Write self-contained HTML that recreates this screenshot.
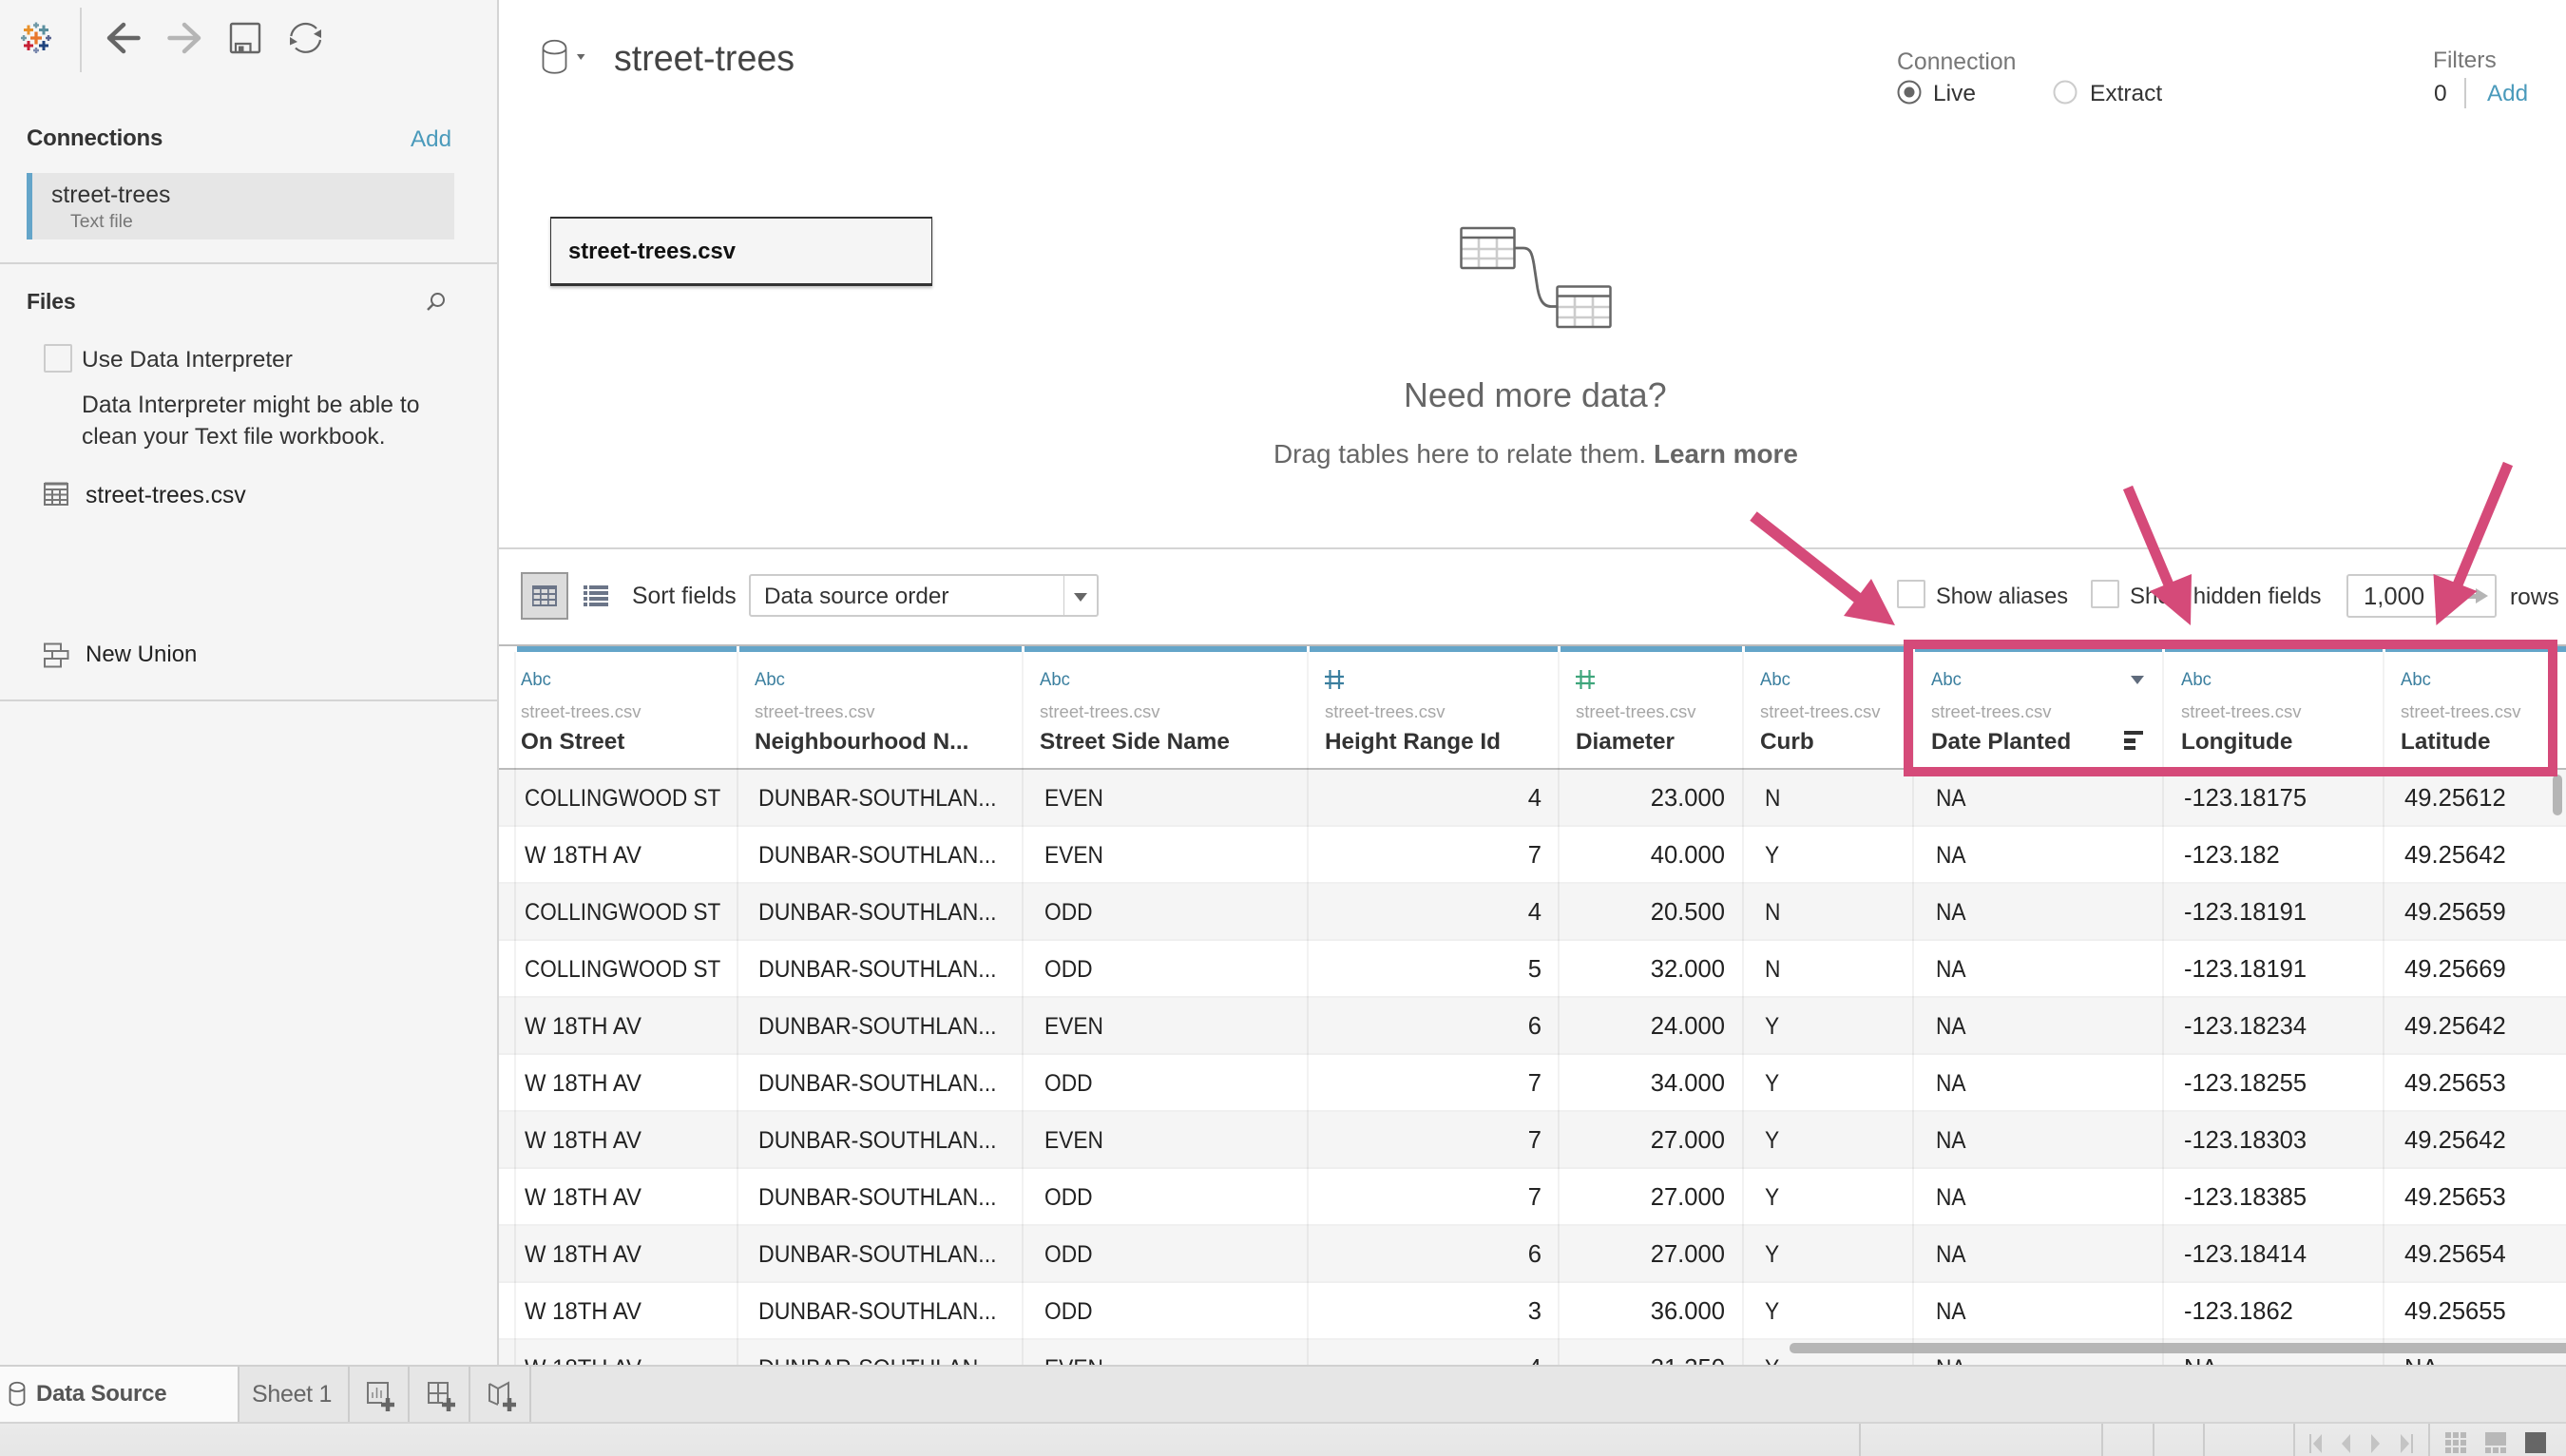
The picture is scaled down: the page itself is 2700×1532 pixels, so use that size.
<!DOCTYPE html>
<html lang="en"><head><meta charset="utf-8"><title>street-trees</title>
<style>
html,body{margin:0;padding:0;width:2700px;height:1532px;overflow:hidden;background:#fff}
#a{position:relative;width:2700px;height:1532px;overflow:hidden;font-family:"Liberation Sans",Arial,sans-serif;color:#333;font-size:24.5px}
#a div,#a span{position:absolute;white-space:nowrap}
.t{line-height:30px;height:30px;margin-top:1px}
.z{margin-top:0}
.b{font-weight:bold}
.add{color:#4a9abb}
.cb{width:26px;height:26px;border:2px solid #ccc;border-radius:2px;background:#fff}
.bl{height:6px;top:680px;background:#64a5c9}
.vd{width:2px;top:686px;height:750px;background:rgba(0,0,0,.05)}
.abc{top:703px;line-height:24px;font-size:19.5px;color:#3b7f9f;transform:scaleX(.95);transform-origin:0 50%}
.src{top:736px;line-height:26px;font-size:18.5px;color:#a6a6a6}
.nm{top:766px;line-height:30px;font-size:24.3px;font-weight:bold;color:#333}
#rows{left:525px;top:810px;width:2175px;height:626px;overflow:hidden}
.r{left:0;width:2175px;height:58px;background:#fff;border-bottom:2px solid #f0f0f0;color:#222}
.g{background:#f5f5f5;border-bottom:2px solid #efefef}
.r span{top:15px;line-height:30px;font-size:25px}
.x{transform:scaleX(.91);transform-origin:0 50%}
.cw{transform:scaleX(.9);transform-origin:0 50%}
.w{transform:scaleX(.955);transform-origin:0 50%}
.du{transform:scaleX(.925);transform-origin:0 50%}
.c1{left:27px}.c2{left:273px}.c3{left:574px}.c6{left:1332px}.c7{left:1512px}
.c4{font-size:25.6px!important;width:60px;text-align:right;left:1037px}
.c5{left:1170px;width:120px;text-align:right;font-size:25.6px!important}
.c8{left:1773px;font-size:25.5px!important}.c9{left:2005px;font-size:25.6px!important}
svg{position:absolute;left:0;top:0;overflow:visible}
</style></head><body><div id="a">

<!-- sidebar -->
<div style="left:0;top:0;width:523px;height:1436px;background:#f5f5f5"></div>
<div style="left:523px;top:0;width:2px;height:1436px;background:#d4d4d4"></div>
<div style="left:0;top:276px;width:523px;height:2px;background:#d4d4d4"></div>
<div style="left:0;top:736px;width:523px;height:2px;background:#d4d4d4"></div>
<div style="left:84px;top:8px;width:2px;height:68px;background:#d4d4d4"></div>

<div class="t b" style="left:28px;top:130px;font-size:24px;letter-spacing:-.2px;color:#333">Connections</div>
<div class="t add" style="left:432px;top:131px;font-size:24.2px">Add</div>
<div style="left:28px;top:182px;width:450px;height:70px;background:#e6e6e6"></div>
<div style="left:28px;top:182px;width:6px;height:70px;background:#64a5c9"></div>
<div class="t" style="left:54px;top:190px;font-size:24.8px;color:#333">street-trees</div>
<div class="t z" style="left:74px;top:218px;font-size:19.4px;color:#777">Text file</div>
<div class="t b z" style="left:28px;top:302px;font-size:23px;letter-spacing:-.2px">Files</div>
<div class="cb" style="left:46px;top:362px;background:#f5f5f5"></div>
<div class="t" style="left:86px;top:363px">Use Data Interpreter</div>
<div class="t" style="left:86px;top:411px;font-size:24.7px;color:#333">Data Interpreter might be able to</div>
<div class="t" style="left:86px;top:444px;font-size:24.4px;color:#333">clean your Text file workbook.</div>
<div class="t" style="left:90px;top:506px;font-size:24.7px;color:#222">street-trees.csv</div>
<div class="t" style="left:90px;top:673px;font-size:24px;color:#222">New Union</div>

<!-- header -->
<div class="t z" style="left:646px;top:43px;font-size:37.6px;line-height:36px;height:36px;color:#444">street-trees</div>
<div class="t" style="left:1996px;top:50px;font-size:24.8px;color:#777">Connection</div>
<div class="t" style="left:2034px;top:83px;color:#333">Live</div>
<div class="t" style="left:2199px;top:83px;color:#333">Extract</div>
<div class="t" style="left:2560px;top:48px;color:#777">Filters</div>
<div class="t" style="left:2561px;top:83px;color:#333">0</div>
<div style="left:2593px;top:82px;width:2px;height:32px;background:#ccc"></div>
<div class="t add" style="left:2617px;top:83px;font-size:24.2px">Add</div>

<div style="left:579px;top:228px;width:400px;height:68px;background:#f5f5f5;border:solid #333;border-width:2px 1.5px 3px;box-shadow:0 2px 3px rgba(0,0,0,.25)"></div>
<div class="t b" style="left:598px;top:249px;font-size:23.8px;color:#111">street-trees.csv</div>
<div class="t" style="left:1477px;top:397px;height:36px;line-height:36px;font-size:35.8px;color:#666">Need more data?</div>
<div class="t z" style="left:1340px;top:463px;font-size:27.9px;color:#666">Drag tables here to relate them. <b>Learn more</b></div>

<div style="left:525px;top:576px;width:2175px;height:2px;background:#d4d4d4"></div>

<!-- toolbar 2 -->
<div style="left:548px;top:602px;width:46px;height:46px;background:#dcdcdc;border:2px solid #999"></div>
<div class="t" style="left:665px;top:612px;font-size:24.7px">Sort fields</div>
<div style="left:788px;top:604px;width:364px;height:41px;background:#fff;border:2px solid #ccc;border-radius:3px"></div>
<div style="left:1119px;top:606px;width:1px;height:41px;background:#ccc"></div>
<div class="t" style="left:804px;top:612px;font-size:24.3px">Data source order</div>
<div class="cb" style="left:1996px;top:610px"></div>
<div class="t" style="left:2037px;top:612px;font-size:23.6px">Show aliases</div>
<div class="cb" style="left:2200px;top:610px"></div>
<div class="t" style="left:2241px;top:612px;font-size:24px">Show hidden fields</div>
<div style="left:2469px;top:604px;width:154px;height:42px;background:#fff;border:2px solid #ccc;border-radius:3px"></div>
<div class="t" style="left:2487px;top:612px;font-size:25.6px">1,000</div>
<div class="t" style="left:2641px;top:613px;font-size:24.5px">rows</div>

<!-- table head -->
<div style="left:525px;top:678px;width:2175px;height:2px;background:#bbb"></div>
<div class="bl" style="left:544px;width:231px"></div>
<div class="bl" style="left:778px;width:297px"></div>
<div class="bl" style="left:1078px;width:297px"></div>
<div class="bl" style="left:1378px;width:261px"></div>
<div class="bl" style="left:1642px;width:191px"></div>
<div class="bl" style="left:1836px;width:176px"></div>
<div class="bl" style="left:2015px;width:260px"></div>
<div class="bl" style="left:2278px;width:229px"></div>
<div class="bl" style="left:2510px;width:190px"></div>

<div class="abc" style="left:548px">Abc</div><div class="src" style="left:548px">street-trees.csv</div><div class="nm" style="left:548px">On Street</div>
<div class="abc" style="left:794px">Abc</div><div class="src" style="left:794px">street-trees.csv</div><div class="nm" style="left:794px">Neighbourhood N...</div>
<div class="abc" style="left:1094px">Abc</div><div class="src" style="left:1094px">street-trees.csv</div><div class="nm" style="left:1094px">Street Side Name</div>
<div class="src" style="left:1394px">street-trees.csv</div><div class="nm" style="left:1394px">Height Range Id</div>
<div class="src" style="left:1658px">street-trees.csv</div><div class="nm" style="left:1658px">Diameter</div>
<div class="abc" style="left:1852px">Abc</div><div class="src" style="left:1852px">street-trees.csv</div><div class="nm" style="left:1852px">Curb</div>
<div class="abc" style="left:2032px">Abc</div><div class="src" style="left:2032px">street-trees.csv</div><div class="nm" style="left:2032px">Date Planted</div>
<div class="abc" style="left:2295px">Abc</div><div class="src" style="left:2295px">street-trees.csv</div><div class="nm" style="left:2295px">Longitude</div>
<div class="abc" style="left:2526px">Abc</div><div class="src" style="left:2526px">street-trees.csv</div><div class="nm" style="left:2526px">Latitude</div>

<!-- rows -->
<div id="rows">
<div class="r g" style="top:0"><span class="c1 cw">COLLINGWOOD ST</span><span class="c2 du">DUNBAR-SOUTHLAN...</span><span class="c3 x">EVEN</span><span class="c4">4</span><span class="c5">23.000</span><span class="c6 x">N</span><span class="c7 x">NA</span><span class="c8">-123.18175</span><span class="c9">49.25612</span></div>
<div class="r" style="top:60px"><span class="c1 w">W 18TH AV</span><span class="c2 du">DUNBAR-SOUTHLAN...</span><span class="c3 x">EVEN</span><span class="c4">7</span><span class="c5">40.000</span><span class="c6 x">Y</span><span class="c7 x">NA</span><span class="c8">-123.182</span><span class="c9">49.25642</span></div>
<div class="r g" style="top:120px"><span class="c1 cw">COLLINGWOOD ST</span><span class="c2 du">DUNBAR-SOUTHLAN...</span><span class="c3 x">ODD</span><span class="c4">4</span><span class="c5">20.500</span><span class="c6 x">N</span><span class="c7 x">NA</span><span class="c8">-123.18191</span><span class="c9">49.25659</span></div>
<div class="r" style="top:180px"><span class="c1 cw">COLLINGWOOD ST</span><span class="c2 du">DUNBAR-SOUTHLAN...</span><span class="c3 x">ODD</span><span class="c4">5</span><span class="c5">32.000</span><span class="c6 x">N</span><span class="c7 x">NA</span><span class="c8">-123.18191</span><span class="c9">49.25669</span></div>
<div class="r g" style="top:240px"><span class="c1 w">W 18TH AV</span><span class="c2 du">DUNBAR-SOUTHLAN...</span><span class="c3 x">EVEN</span><span class="c4">6</span><span class="c5">24.000</span><span class="c6 x">Y</span><span class="c7 x">NA</span><span class="c8">-123.18234</span><span class="c9">49.25642</span></div>
<div class="r" style="top:300px"><span class="c1 w">W 18TH AV</span><span class="c2 du">DUNBAR-SOUTHLAN...</span><span class="c3 x">ODD</span><span class="c4">7</span><span class="c5">34.000</span><span class="c6 x">Y</span><span class="c7 x">NA</span><span class="c8">-123.18255</span><span class="c9">49.25653</span></div>
<div class="r g" style="top:360px"><span class="c1 w">W 18TH AV</span><span class="c2 du">DUNBAR-SOUTHLAN...</span><span class="c3 x">EVEN</span><span class="c4">7</span><span class="c5">27.000</span><span class="c6 x">Y</span><span class="c7 x">NA</span><span class="c8">-123.18303</span><span class="c9">49.25642</span></div>
<div class="r" style="top:420px"><span class="c1 w">W 18TH AV</span><span class="c2 du">DUNBAR-SOUTHLAN...</span><span class="c3 x">ODD</span><span class="c4">7</span><span class="c5">27.000</span><span class="c6 x">Y</span><span class="c7 x">NA</span><span class="c8">-123.18385</span><span class="c9">49.25653</span></div>
<div class="r g" style="top:480px"><span class="c1 w">W 18TH AV</span><span class="c2 du">DUNBAR-SOUTHLAN...</span><span class="c3 x">ODD</span><span class="c4">6</span><span class="c5">27.000</span><span class="c6 x">Y</span><span class="c7 x">NA</span><span class="c8">-123.18414</span><span class="c9">49.25654</span></div>
<div class="r" style="top:540px"><span class="c1 w">W 18TH AV</span><span class="c2 du">DUNBAR-SOUTHLAN...</span><span class="c3 x">ODD</span><span class="c4">3</span><span class="c5">36.000</span><span class="c6 x">Y</span><span class="c7 x">NA</span><span class="c8">-123.1862</span><span class="c9">49.25655</span></div>
<div class="r g" style="top:600px"><span class="c1 w">W 18TH AV</span><span class="c2 du">DUNBAR-SOUTHLAN...</span><span class="c3 x">EVEN</span><span class="c4">4</span><span class="c5">31.250</span><span class="c6 x">Y</span><span class="c7 x">NA</span><span class="c8">NA</span><span class="c9">NA</span></div>
</div>
<div style="left:525px;top:808px;width:2175px;height:2px;background:#bbb"></div>
<div class="vd" style="left:541px"></div><div class="vd" style="left:775px"></div><div class="vd" style="left:1075px"></div><div class="vd" style="left:1375px"></div><div class="vd" style="left:1639px"></div><div class="vd" style="left:1833px"></div><div class="vd" style="left:2012px"></div><div class="vd" style="left:2275px"></div><div class="vd" style="left:2507px"></div>
<div style="left:2686px;top:815px;width:10px;height:43px;border-radius:5px;background:#b5b5b5"></div>
<div style="left:1883px;top:1413px;width:817px;height:11px;border-radius:5px 0 0 5px;background:rgba(170,170,170,.85)"></div>

<!-- bottom -->
<div style="left:0;top:1436px;width:2700px;height:62px;background:#e6e6e6;border-top:2px solid #d0d0d0;box-sizing:border-box"></div>
<div style="left:0;top:1438px;width:250px;height:58px;background:#fafafa"></div>
<div style="left:0;top:1496px;width:2700px;height:2px;background:#d4d4d4"></div>
<div style="left:0;top:1498px;width:2700px;height:34px;background:linear-gradient(#eaeaea,#e6e6e6)"></div>
<div style="left:250px;top:1438px;width:2px;height:58px;background:#ccc"></div>
<div style="left:366px;top:1438px;width:2px;height:58px;background:#ccc"></div>
<div style="left:429px;top:1438px;width:2px;height:58px;background:#ccc"></div>
<div style="left:493px;top:1438px;width:2px;height:58px;background:#ccc"></div>
<div style="left:557px;top:1438px;width:2px;height:58px;background:#ccc"></div>
<div class="t b z" style="left:38px;top:1452px;font-size:24px;letter-spacing:-.25px;color:#555">Data Source</div>
<div class="t z" style="left:265px;top:1452px;font-size:25px;letter-spacing:-.3px;color:#666">Sheet 1</div>
<div style="left:1956px;top:1498px;width:2px;height:34px;background:#ccc"></div>
<div style="left:2211px;top:1498px;width:2px;height:34px;background:#ccc"></div>
<div style="left:2265px;top:1498px;width:2px;height:34px;background:#ccc"></div>
<div style="left:2318px;top:1498px;width:2px;height:34px;background:#ccc"></div>
<div style="left:2413px;top:1498px;width:2px;height:34px;background:#ccc"></div>
<div style="left:2555px;top:1498px;width:2px;height:34px;background:#ccc"></div>

<svg width="2700" height="1532" viewBox="0 0 2700 1532" fill="none">
<!-- logo -->
<g stroke-width="3">
<path d="M32 40H44M38 33.500V46.500" stroke="#e8762b" stroke-width="3.300"/>
<path d="M25 31.500H35M30 26.500V36.500" stroke="#e8912b"/>
<path d="M41 31.500H51M46 26.500V36.500" stroke="#5b8f9e"/>
<path d="M25 48H35M30 43V53" stroke="#c72035"/>
<path d="M41 48H51M46 43V53" stroke="#1f447e"/>
<path d="M35 26.500H41M38 23.500V29.500" stroke="#7099a6" stroke-width="2.400"/>
<path d="M22 40H28M25 37V43" stroke="#7099a6" stroke-width="2.400"/>
<path d="M48 40H54M51 37V43" stroke="#5b6591" stroke-width="2.400"/>
<path d="M35 53H41M38 50V56" stroke="#7b89ae" stroke-width="2.400"/>
</g>
<!-- nav -->
<path d="M145.500 40H115M130 26L115 40L130 54" stroke="#666" stroke-width="4.500" stroke-linecap="round" stroke-linejoin="round"/>
<path d="M178.500 40H209M194 26L209 40L194 54" stroke="#b5b5b5" stroke-width="4.500" stroke-linecap="round" stroke-linejoin="round"/>
<rect x="243" y="25" width="30" height="30" rx="1.500" stroke="#666" stroke-width="2.400"/>
<path d="M248 55V46H263.500V55" stroke="#666" stroke-width="2.200"/><rect x="251" y="48.500" width="5.500" height="7" fill="#666"/>
<path d="M306.300 38A15.500 15.500 0 0 1 333 30M337 42A15.500 15.500 0 0 1 311 50.500" stroke="#666" stroke-width="2.200"/>
<path d="M338 31L338 40L330 35.700ZM305 39L305 47.500L313 44Z" fill="#666"/>
<!-- search -->
<circle cx="460.500" cy="315.500" r="6.500" stroke="#666" stroke-width="2"/><path d="M455.500 320.500L450 326" stroke="#666" stroke-width="2.400"/>
<!-- table icon -->
<path d="M47 509H71V531H47ZM47 515H71M47 520.500H71M47 526H71M55 515V531M63 515V531" stroke="#777" stroke-width="2"/>
<path d="M47 509H71" stroke="#777" stroke-width="3"/>
<!-- union icon -->
<path d="M47 677.500H64V685H47ZM55 685H71.500V693H55ZM47 693H64V701.500H47Z" stroke="#777" stroke-width="2"/>
<!-- db icon -->
<path d="M571.500 51C571.500 40 595.500 40 595.500 51V70C595.500 79 571.500 79 571.500 70ZM571.500 52C575 58 592 58 595.500 52" stroke="#666" stroke-width="1.800"/>
<path d="M607 57H615.500L611.200 63Z" fill="#666"/>
<!-- relate -->
<g stroke-linejoin="round">
<path d="M1556 251V282M1575 251V282M1538 262H1593M1538 272H1593" stroke="#ccc" stroke-width="2.600"/>
<rect x="1537.500" y="240" width="56" height="42" rx="1.500" stroke="#666" stroke-width="2.500"/><path d="M1537 250H1594" stroke="#666" stroke-width="2.500"/>
<path d="M1657 312V344M1676 312V344M1639 323H1694M1639 334H1694" stroke="#ccc" stroke-width="2.600"/>
<rect x="1638.500" y="301.500" width="56" height="42.500" rx="1.500" stroke="#666" stroke-width="2.500"/><path d="M1638 311.500H1695" stroke="#666" stroke-width="2.500"/>
<path d="M1594 261H1603C1610 261 1612 266 1614 278L1617 298C1619 314 1623 322.500 1632 322.500H1638" stroke="#666" stroke-width="2.800"/>
</g>
<!-- radios -->
<circle cx="2009" cy="97" r="11.500" stroke="#666" stroke-width="2"/><circle cx="2009" cy="97" r="5.500" fill="#666"/>
<circle cx="2173" cy="97" r="11.500" stroke="#ccc" stroke-width="2"/>
<!-- view icons -->
<rect x="560" y="616" width="26" height="22" fill="#6b7588"/>
<g fill="#dcdcdc">
<rect x="561.700" y="620" width="6.300" height="4"/><rect x="569.700" y="620" width="6.300" height="4"/><rect x="577.700" y="620" width="6.300" height="4"/>
<rect x="561.700" y="626" width="6.300" height="4"/><rect x="569.700" y="626" width="6.300" height="4"/><rect x="577.700" y="626" width="6.300" height="4"/>
<rect x="561.700" y="632" width="6.300" height="4"/><rect x="569.700" y="632" width="6.300" height="4"/><rect x="577.700" y="632" width="6.300" height="4"/>
</g>
<path d="M614 616H618V620H614ZM620 616H640V620H620ZM614 622H618V626H614ZM620 622H640V626H620ZM614 628H618V632H614ZM620 628H640V632H620ZM614 634H618V638H614ZM620 634H640V638H620Z" fill="#6b7588"/>
<path d="M1130 624H1144L1137 633Z" fill="#666"/>
<path d="M2605 619L2618 627L2605 635Z" fill="#b5b5b5"/><rect x="2590" y="625" width="16" height="5" fill="#b5b5b5"/>
<!-- header hash -->
<path d="M1399.500 705V725M1409 705V725M1394 712H1414M1394 719H1414" stroke="#3b7f9f" stroke-width="2.200"/>
<path d="M1663.500 705V725M1672.500 705V725M1658 712H1678M1658 719H1678" stroke="#3fa67c" stroke-width="2.200"/>
<!-- col menu -->
<path d="M2242 711H2256L2249 720Z" fill="#5f6b7c"/>
<path d="M2235 769H2255V773H2235ZM2235 777H2247V782H2235ZM2235 785H2247V789H2235Z" fill="#333"/>
<!-- tab icons -->
<path d="M10.500 1460C10.500 1453 25.500 1453 25.500 1460V1474C25.500 1480 10.500 1480 10.500 1474ZM10.500 1461C13 1465 23 1465 25.500 1461" stroke="#666" stroke-width="1.800"/>
<path d="M408 1474V1455H387V1476H402" stroke="#777" stroke-width="2"/>
<path d="M392 1471V1465M396.500 1471V1460M401 1471V1463" stroke="#888" stroke-width="1.500"/>
<path d="M401 1478H415M408 1471V1485" stroke="#666" stroke-width="4.500"/>
<path d="M471 1474V1455H451V1476H466M451 1466H471M461 1455V1476" stroke="#777" stroke-width="2"/>
<path d="M465 1478H479M472 1471V1485" stroke="#666" stroke-width="4.500"/>
<path d="M515 1456L524 1461L535 1455V1474M515 1456V1474L524 1478M524 1461V1477" stroke="#777" stroke-width="2"/>
<path d="M529 1478H543M536 1471V1485" stroke="#666" stroke-width="4.500"/>
<!-- pager -->
<path d="M2431 1509V1529" stroke="#c4c4c4" stroke-width="2"/>
<path d="M2443 1509V1529L2434 1519ZM2473 1509V1529L2464 1519ZM2495 1509V1529L2504 1519ZM2526 1509V1529L2535 1519Z" fill="#c4c4c4"/>
<path d="M2538 1509V1529" stroke="#c4c4c4" stroke-width="2"/>
<g fill="#b8b8b8">
<rect x="2573" y="1507" width="6" height="6"/><rect x="2581" y="1507" width="6" height="6"/><rect x="2589" y="1507" width="6" height="6"/>
<rect x="2573" y="1515" width="6" height="6"/><rect x="2581" y="1515" width="6" height="6"/><rect x="2589" y="1515" width="6" height="6"/>
<rect x="2573" y="1523" width="6" height="6"/><rect x="2581" y="1523" width="6" height="6"/><rect x="2589" y="1523" width="6" height="6"/>
<rect x="2615" y="1507" width="22" height="14"/><rect x="2615" y="1523" width="6" height="6"/><rect x="2623" y="1523" width="6" height="6"/><rect x="2631" y="1523" width="6" height="6"/>
</g>
<rect x="2657" y="1507" width="22" height="22" fill="#666"/>
<!-- annotations -->
<g fill="#d54a79" stroke="#d54a79">
<rect x="2008" y="678" width="678" height="134" fill="none" stroke-width="10"/>
<path d="M1845 543L1957 631" stroke-width="12" fill="none"/>
<path d="M1994 658L1969 609L1940 648Z" stroke="none"/>
<path d="M2239 513L2284 620" stroke-width="11" fill="none"/>
<path d="M2305 658L2306 604L2262 622Z" stroke="none"/>
<path d="M2639 488L2584 620" stroke-width="11" fill="none"/>
<path d="M2563.500 658L2560.500 604L2606.500 622Z" stroke="none"/>
</g>
</svg>
</div></body></html>
